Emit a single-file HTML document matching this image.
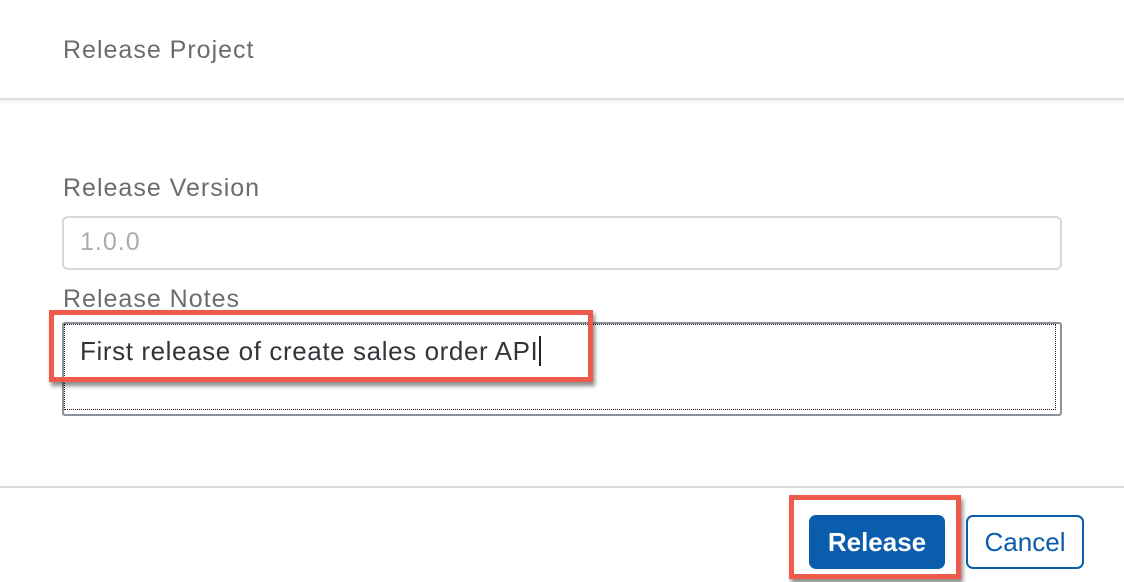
<!DOCTYPE html>
<html><head><style>
body{margin:0;width:1124px;height:582px;background:#fff;font-family:"Liberation Sans",sans-serif;position:relative;overflow:hidden}
.a{position:absolute}
</style></head><body>
<div class="a" style="left:63px;top:36px;font-size:25px;color:#6a6d70;letter-spacing:1px">Release Project</div>
<div class="a" style="left:0;top:98px;width:1124px;height:2px;background:#dcdcdc"></div>
<div class="a" style="left:0;top:100px;width:1124px;height:6px;background:linear-gradient(#f2f2f2,#fff)"></div>
<div class="a" style="left:63px;top:174px;font-size:25px;color:#6a6d70;letter-spacing:1px">Release Version</div>
<div class="a" style="left:62px;top:216px;width:996px;height:50px;border:2px solid #d5d8dc;border-radius:6px"></div>
<div class="a" style="left:80px;top:228px;font-size:25px;color:#a9abae;letter-spacing:1px">1.0.0</div>
<div class="a" style="left:63px;top:285px;font-size:25px;color:#6a6d70;letter-spacing:1px">Release Notes</div>
<div class="a" style="left:62px;top:322px;width:996px;height:90px;border:2px solid #89919a;border-radius:3px"></div>
<div class="a" style="left:64px;top:324px;width:992px;height:86px;border:1px dotted #222;box-sizing:border-box"></div>
<div class="a" style="left:80px;top:336px;font-size:26px;color:#32363a;letter-spacing:0.6px">First release of create sales order API<span style="border-right:2px solid #222;margin-left:1px"></span></div>
<div class="a" style="left:49px;top:310px;width:534px;height:62px;border:5px solid #f05a4d;box-shadow:2px 4px 4px rgba(0,0,0,.45)"></div>
<div class="a" style="left:0;top:486px;width:1124px;height:2px;background:#dcdcdc"></div>
<div class="a" style="left:789px;top:495px;width:162px;height:74px;border:5px solid #f05a4d;box-shadow:2px 4px 4px rgba(0,0,0,.45)"></div>
<div class="a" style="left:809px;top:515px;width:136px;height:54px;background:#0a5cad;border-radius:7px;color:#fff;font-weight:bold;font-size:26px;text-align:center;line-height:54px">Release</div>
<div class="a" style="left:966px;top:515px;width:114px;height:50px;border:2px solid #0a5cad;border-radius:7px;color:#0a5cad;font-size:26px;text-align:center;line-height:50px">Cancel</div>
</body></html>
